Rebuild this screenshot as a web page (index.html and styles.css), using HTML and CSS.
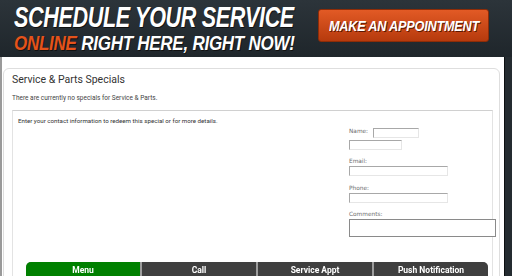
FILE: index.html
```html
<!DOCTYPE html>
<html>
<head>
<meta charset="utf-8">
<link rel="stylesheet" href="styles.css">
</head>
<body>
<header class="banner">
  <div class="slogan">
    <div class="line1"><span class="squeeze s1">SCHEDULE YOUR SERVICE</span></div>
    <div class="line2"><span class="squeeze s2"><span class="hl">ONLINE</span> RIGHT HERE, RIGHT NOW!</span></div>
  </div>
  <div class="cta"><span class="squeeze s3">MAKE AN APPOINTMENT</span></div>
</header>
<div class="main">
  <div class="edge-left"></div>
  <div class="content">
    <section class="panel">
      <h1 class="title">Service &amp; Parts Specials</h1>
      <p class="note">There are currently no specials for Service &amp; Parts.</p>
      <div class="box">
        <p class="intro">Enter your contact information to redeem this special or for more details.</p>
        <form class="form">
          <div class="row"><label>Name:</label><input class="in in-first"></div>
          <input class="in in-last">
          <label>Email:</label>
          <input class="in in-wide in-email">
          <label>Phone:</label>
          <input class="in in-wide">
          <label>Comments:</label>
          <textarea class="in ta"></textarea>
        </form>
      </div>
    </section>
  </div>
  <div class="edge-right"></div>
</div>
<nav class="tabbar">
  <div class="tab active">Menu</div>
  <div class="tab">Call</div>
  <div class="tab">Service Appt</div>
  <div class="tab">Push Notification</div>
</nav>
</body>
</html>
```
FILE: styles.css
```css
html, body {
  margin: 0;
  padding: 0;
  width: 512px;
  height: 276px;
  overflow: hidden;
  background: #ffffff;
  font-family: Roboto, "Liberation Sans", sans-serif;
}
.banner {
  height: 57px;
  background: linear-gradient(#2c343a, #1f262b);
  display: flex;
  align-items: flex-start;
  box-sizing: border-box;
  padding: 3px 0 0 14px;
}
.slogan {
  flex: 0 0 290px;
  width: 290px;
  font-family: "Liberation Sans", sans-serif;
  font-weight: bold;
  font-style: italic;
  color: #ffffff;
  text-shadow: 1px 1px 0 #111;
  white-space: nowrap;
}
.squeeze {
  display: inline-block;
  transform-origin: left center;
}
.line1 {
  font-size: 29px;
  line-height: 28px;
  height: 28px;
}
.s1 {
  transform: scaleX(0.745);
  letter-spacing: -0.5px;
}
.line2 {
  font-size: 20px;
  line-height: 22px;
  height: 22px;
  margin-top: 1px;
}
.s2 {
  transform: scaleX(0.85);
  letter-spacing: -0.3px;
}
.hl { color: #e4531b; }
.cta {
  flex: 0 0 auto;
  margin: 6px 0 0 14px;
  width: 171px;
  height: 33px;
  box-sizing: border-box;
  border: 1px solid #8e2c07;
  border-radius: 3px;
  background: linear-gradient(#e25a25, #b63a0d);
  color: #ffffff;
  font-family: "Liberation Sans", sans-serif;
  font-weight: bold;
  font-style: italic;
  font-size: 15px;
  line-height: 31px;
  padding-left: 10px;
  text-shadow: 1px 1px 0 #5a1803;
  white-space: nowrap;
  overflow: hidden;
}
.s3 {
  transform: scaleX(0.85);
  letter-spacing: -0.3px;
}
.main {
  display: flex;
  height: 219px;
}
.edge-left {
  width: 2px;
  background: #9a9a9a;
}
.content {
  flex: 1;
  padding: 11px 0 0 1px;
}
.edge-right {
  width: 7px;
  background: #242b30;
  border-left: 1px solid #0c0f11;
}
.panel {
  width: 497px;
  box-sizing: border-box;
  border: 1px solid #dedede;
  border-radius: 6px;
  padding: 0 0 0 8px;
  height: 260px;
}
.title {
  margin: 0;
  padding-top: 4px;
  font-size: 10.5px;
  font-weight: normal;
  color: #333;
  line-height: 14px;
}
.note {
  margin: 7px 0 0;
  font-size: 6.5px;
  color: #444;
  line-height: 9px;
}
.box {
  margin-top: 7px;
  width: 481px;
  height: 200px;
  box-sizing: border-box;
  border: 1px solid #e3e3e3;
  border-top-color: #d0d0d0;
  padding: 6px 0 0 5px;
}
.intro {
  margin: 0;
  font-size: 6.2px;
  line-height: 8px;
  color: #333;
}
.form {
  margin: 2px 0 0 331px;
  display: flex;
  flex-direction: column;
  align-items: flex-start;
  font-family: "DejaVu Sans", sans-serif;
  font-size: 5.8px;
  color: #6e6e6e;
}
.form label {
  line-height: 8px;
}
.row {
  display: flex;
  align-items: flex-start;
  gap: 5px;
}
.in {
  box-sizing: border-box;
  border: 1px solid #a8a8a8;
  border-right-color: #e6e6e6;
  border-bottom-color: #e6e6e6;
  background: #fff;
  padding: 0;
  margin: 0;
  display: block;
}
.in-first {
  width: 46px;
  height: 10px;
  margin-top: 1px;
}
.in-last {
  width: 53px;
  height: 10px;
  margin-top: 2px;
  margin-bottom: 7px;
}
.in-wide {
  width: 99px;
  height: 10px;
  margin-top: 1px;
  margin-bottom: 7px;
}
.in-email {
  margin-bottom: 8px;
}
.ta {
  width: 147px;
  height: 18px;
  margin-top: 1px;
  resize: none;
  border-color: #8a8a8a;
}
.tabbar {
  position: fixed;
  left: 26px;
  top: 262px;
  width: 462px;
  height: 20px;
  display: flex;
  gap: 2px;
  background: #9d9d9d;
  border-radius: 5px 5px 0 0;
  overflow: hidden;
}
.tab {
  flex: 1;
  background: #3f3f3f;
  color: #ffffff;
  font-weight: bold;
  font-size: 8.5px;
  text-align: center;
  line-height: 16px;
}
.tab.active {
  background: #008000;
}
```
